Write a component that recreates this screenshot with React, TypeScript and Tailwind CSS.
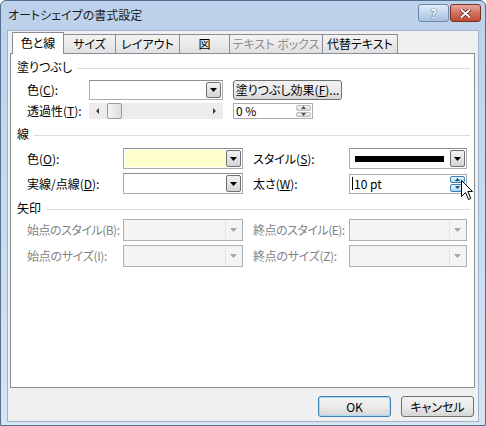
import React from 'react';

const FONT = "font-['Noto_Sans_CJK_JP',sans-serif] [font-feature-settings:'palt'] whitespace-nowrap";

const DownArrow = ({ color = '#000' }: { color?: string }) => (
  <svg width="7" height="4" viewBox="0 0 7 4">
    <polygon points="0,0 7,0 3.5,4" fill={color} />
  </svg>
);

const SpinArrows = ({ hot }: { hot?: boolean }) => (
  <div className="flex flex-col w-[15px] my-px mr-px gap-px">
    {[0, 1].map((i) => (
      <div
        key={i}
        className={`flex-1 flex items-center justify-center rounded-[2px] border ${
          hot
            ? 'border-[#3c7fb1] bg-gradient-to-b from-[#eaf6fd] to-[#a7d9f5]'
            : 'border-[#b8bcc2] bg-gradient-to-b from-[#f4f4f4] to-[#dcdcdc]'
        }`}
      >
        <svg width="5" height="3" viewBox="0 0 5 3">
          <polygon points={i === 0 ? '0,3 5,3 2.5,0' : '0,0 5,0 2.5,3'} fill={hot ? '#1d4f73' : '#505050'} />
        </svg>
      </div>
    ))}
  </div>
);

const Combo = ({
  className,
  fill,
  children,
}: {
  className: string;
  fill?: string;
  children?: React.ReactNode;
}) => (
  <div className={`flex border border-[#abadb3] border-t-[#8e8f8f] bg-white ${className}`}>
    <div className={`flex-1 flex items-center m-px ${fill ?? ''}`}>{children}</div>
    <div className="w-[15px] my-px mr-px flex items-center justify-center rounded-[2px] border border-[#707070] bg-gradient-to-b from-[#f2f2f2] to-[#d4d4d4]">
      <DownArrow />
    </div>
  </div>
);

const DisabledCombo = ({ className }: { className: string }) => (
  <div className={`flex border border-[#adb2b5] bg-[#f4f4f4] ${className}`}>
    <div className="flex-1" />
    <div className="w-[16px] my-px mr-px flex items-center justify-center border-l border-[#e2e2e2]">
      <DownArrow color="#a6a6a6" />
    </div>
  </div>
);

const Header = ({ label, mt }: { label: string; mt: string }) => (
  <div className={`flex items-center gap-[5px] h-[14px] ${mt}`}>
    <span>{label}</span>
    <div className="flex-1 h-px bg-[#d5dfe5] mt-[2px]" />
  </div>
);

const tabs = [
  { label: '色と線', w: 'w-[52px]', active: true },
  { label: 'サイズ', w: 'w-[52px]' },
  { label: 'レイアウト', w: 'w-[64px]' },
  { label: '図', w: 'w-[50px]' },
  { label: 'テキスト ボックス', w: 'w-[93px]', disabled: true },
  { label: '代替テキスト', w: 'w-[75px]' },
];

export default function App() {
  return (
    <div
      className={`relative w-[486px] h-[426px] flex flex-col overflow-hidden rounded-t-[6px] border border-[#52708f] bg-gradient-to-b from-[#bcd1ea] to-[#d6e4f3] text-[12px] leading-[14px] text-black ${FONT}`}
    >
      {/* title bar */}
      <div className="h-[29px] flex items-center justify-between pl-[7px] pr-[4px]">
        <span className="text-[12px] text-[#1b1b1b] -mt-[2px]">オートシェイプの書式設定</span>
        <div className="self-start mt-[3px] flex gap-px">
          <div className="w-[31px] h-[18px] rounded-[3px] border border-[#6b88ab] bg-gradient-to-b from-[#e3edf8] via-[#c3d6ec] to-[#a9c2e0] flex items-center justify-center">
            <span className="text-[13px] font-bold leading-none text-white [text-shadow:0_0_1px_#2c4966,0_0_1px_#2c4966]">?</span>
          </div>
          <div className="w-[31px] h-[18px] rounded-[3px] border border-[#7a3026] bg-gradient-to-b from-[#e9a99b] via-[#d2705d] to-[#c04a32] flex items-center justify-center">
            <svg width="11" height="9" viewBox="0 0 11 9">
              <path d="M1.5 1 L9.5 8 M9.5 1 L1.5 8" stroke="#5a1b12" strokeWidth="3.4" strokeLinecap="round" />
              <path d="M1.5 1 L9.5 8 M9.5 1 L1.5 8" stroke="#ffffff" strokeWidth="2" strokeLinecap="round" />
            </svg>
          </div>
        </div>
      </div>

      {/* client area */}
      <div className="flex-1 flex px-[6px] pb-[3px]">
        <div className="flex-1 flex flex-col bg-[#f0f0f0] border border-[#9fb1c6] pl-[2px] pr-[3px]">
          {/* tabs */}
          <div className="flex items-end pl-[2px] h-[21px] mt-px">
            {tabs.map((t) =>
              t.active ? (
                <div
                  key={t.label}
                  className={`${t.w} h-[22px] -mb-px relative z-10 bg-white border border-b-0 border-[#898c95] flex items-center justify-center pb-px`}
                >
                  {t.label}
                </div>
              ) : (
                <div
                  key={t.label}
                  className={`${t.w} h-[19px] border border-b-0 border-l-0 border-[#898c95] bg-gradient-to-b from-[#f3f3f3] to-[#e1e1e1] flex items-center justify-center ${
                    t.disabled ? 'text-[#8d8d8d]' : ''
                  }`}
                >
                  {t.label}
                </div>
              )
            )}
          </div>

          {/* panel */}
          <div className="h-[335px] bg-white border border-[#898c95] flex flex-col pl-[6px] pr-[4px] pt-[6px]">
            <Header label="塗りつぶし" mt="mt-0" />
            <div className="flex items-center h-[20px] mt-[6px] pl-[10px]">
              <span className="w-[62px]">
                色(<u>C</u>):
              </span>
              <Combo className="w-[134px] h-[20px]" />
              <div className="ml-[10px] w-[109px] h-[20px] rounded-[3px] border border-[#707070] bg-gradient-to-b from-[#f2f2f2] via-[#ebebeb] to-[#d6d6d6] flex items-center justify-center">
                塗りつぶし効果(<u>F</u>)...
              </div>
            </div>
            <div className="flex items-center h-[16px] mt-[3px] pl-[10px]">
              <span className="w-[62px]">
                透過性(<u>T</u>):
              </span>
              <div className="w-[134px] h-[16px] bg-[#ececec] flex items-stretch">
                <div className="w-[17px] flex items-center justify-center">
                  <svg width="3" height="6" viewBox="0 0 3 6">
                    <polygon points="3,0 3,6 0,3" fill="#404040" />
                  </svg>
                </div>
                <div className="w-[15px] ml-px rounded-[2px] border border-[#9a9a9a] bg-gradient-to-r from-[#f4f4f4] to-[#dedede]" />
                <div className="flex-1" />
                <div className="w-[17px] flex items-center justify-center">
                  <svg width="3" height="6" viewBox="0 0 3 6">
                    <polygon points="0,0 0,6 3,3" fill="#404040" />
                  </svg>
                </div>
              </div>
              <div className="ml-[10px] w-[80px] h-[16px] flex border border-[#abadb3] bg-white">
                <span className="flex-1 pl-[2px] leading-[14px]">0 %</span>
                <SpinArrows />
              </div>
            </div>

            <Header label="線" mt="mt-[8px]" />
            <div className="flex items-center h-[21px] mt-[7px] pl-[10px]">
              <span className="w-[96px]">
                色(<u>O</u>):
              </span>
              <Combo className="w-[120px] h-[21px]" fill="bg-[#ffffcc]" />
              <span className="w-[96px] ml-[10px]">
                スタイル(<u>S</u>):
              </span>
              <Combo className="w-[118px] h-[21px]">
                <div className="ml-[4px] mr-[5px] flex-1 h-[6px] bg-black" />
              </Combo>
            </div>
            <div className="flex items-center h-[21px] mt-[4px] pl-[10px]">
              <span className="w-[96px]">
                実線/点線(<u>D</u>):
              </span>
              <Combo className="w-[120px] h-[21px]" />
              <span className="w-[96px] ml-[10px]">
                太さ(<u>W</u>):
              </span>
              <div className="w-[118px] h-[20px] flex border border-[#abadb3] bg-white">
                <div className="flex-1 flex items-center pl-[2px]">
                  <div className="w-px h-[13px] bg-black" />
                  <span className="ml-px">10 pt</span>
                </div>
                <SpinArrows hot />
              </div>
            </div>

            <Header label="矢印" mt="mt-[7px]" />
            <div className="flex items-center h-[22px] mt-[4px] pl-[10px] text-[#838383]">
              <span className="w-[96px] tracking-[-0.5px]">始点のスタイル(B):</span>
              <DisabledCombo className="w-[120px] h-[22px]" />
              <span className="w-[96px] ml-[10px] tracking-[-0.5px]">終点のスタイル(E):</span>
              <DisabledCombo className="w-[118px] h-[22px]" />
            </div>
            <div className="flex items-center h-[22px] mt-[4px] pl-[10px] text-[#838383]">
              <span className="w-[96px] tracking-[-0.3px]">始点のサイズ(I):</span>
              <DisabledCombo className="w-[120px] h-[22px]" />
              <span className="w-[96px] ml-[10px] tracking-[-0.3px]">終点のサイズ(Z):</span>
              <DisabledCombo className="w-[118px] h-[22px]" />
            </div>
          </div>

          {/* dialog buttons */}
          <div className="flex justify-end gap-[10px] pt-[8px] pr-[1px]">
            <div className="w-[73px] h-[21px] rounded-[3px] border border-[#3c7fb1] bg-gradient-to-b from-[#f2f2f2] via-[#ebebeb] to-[#d6d6d6] shadow-[inset_0_0_0_1px_#a6dbf7] flex items-center justify-center">
              OK
            </div>
            <div className="w-[73px] h-[21px] rounded-[3px] border border-[#707070] bg-gradient-to-b from-[#f2f2f2] via-[#ebebeb] to-[#d6d6d6] flex items-center justify-center">
              キャンセル
            </div>
          </div>
        </div>
      </div>

      {/* mouse pointer over the spin button */}
      <svg className="absolute left-[460px] top-[179px]" width="13" height="21" viewBox="0 0 13 21">
        <path d="M0.5 0.5 L0.5 16.5 L4.5 12.5 L7.5 19.5 L9.8 18.5 L6.8 11.5 L11.5 11.5 Z" fill="#fff" stroke="#000" strokeWidth="1" />
      </svg>
    </div>
  );
}
